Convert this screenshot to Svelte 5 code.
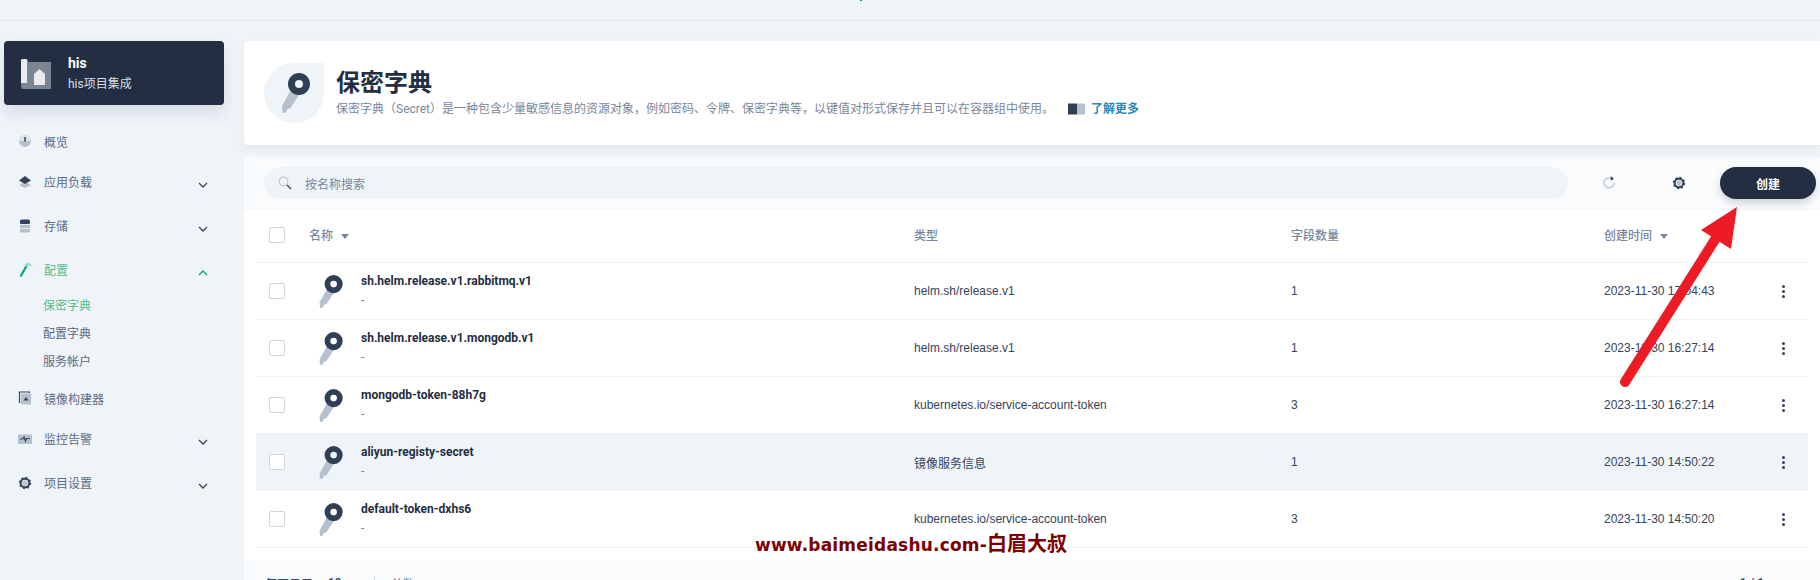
<script lang="ts">
	const menu = [
		{ name: '概览', icon: 'overview' },
		{ name: '应用负载', icon: 'layers', arrow: 'down' },
		{ name: '存储', icon: 'db', arrow: 'down' },
		{ name: '配置', icon: 'hammer', arrow: 'up', active: true, children: ['保密字典', '配置字典', '服务帐户'] },
		{ name: '镜像构建器', icon: 'image' },
		{ name: '监控告警', icon: 'monitor', arrow: 'down' },
		{ name: '项目设置', icon: 'gear', arrow: 'down' }
	];

	const rows = [
		{ name: 'sh.helm.release.v1.rabbitmq.v1', type: 'helm.sh/release.v1', count: 1, time: '2023-11-30 17:04:43' },
		{ name: 'sh.helm.release.v1.mongodb.v1', type: 'helm.sh/release.v1', count: 1, time: '2023-11-30 16:27:14' },
		{ name: 'mongodb-token-88h7g', type: 'kubernetes.io/service-account-token', count: 3, time: '2023-11-30 16:27:14' },
		{ name: 'aliyun-registy-secret', type: '镜像服务信息', count: 1, time: '2023-11-30 14:50:22', hover: true },
		{ name: 'default-token-dxhs6', type: 'kubernetes.io/service-account-token', count: 3, time: '2023-11-30 14:50:20' }
	];
</script>

{#snippet keyIcon(size)}
	<svg width={size} height={size} viewBox="0 -1 40 40">
		<path d="M17 16 L8 32 L8.500 39 L12 38.500 L13 35.500 L16.500 34 L25 21Z" fill="#b6c1cd" />
		<circle cx="25" cy="10" r="7.500" fill="none" stroke="#2f3f55" stroke-width="7" />
	</svg>
{/snippet}

{#snippet gear(size, hub)}
	<svg width={size} height={size} viewBox="0 0 16 16">
		<circle cx="8" cy="8" r="5" fill="none" stroke="#36435c" stroke-width="2.400" />
		<circle cx="8" cy="8" r="6.200" fill="none" stroke="#36435c" stroke-width="1.800" stroke-dasharray="2 2.870" />
		<circle cx="8" cy="8" r="3" fill={hub} />
	</svg>
{/snippet}

{#snippet navIcon(kind)}
	<svg width="16" height="16" viewBox="0 0 16 16">
		{#if kind === 'overview'}
			<circle cx="8" cy="8" r="6" fill="#b6c1cd" />
			<path d="M2 8a6 6 0 0 1 12 0Z" fill="#dfe5ec" />
			<rect x="7.200" y="4" width="1.600" height="4.500" fill="#36435c" />
		{:else if kind === 'layers'}
			<path d="M8 8 L14 11 L8 14 L2 11Z" fill="#b6c1cd" />
			<path d="M8 2 L14 6.500 L8 10 L2 6.500Z" fill="#36435c" />
		{:else if kind === 'db'}
			<rect x="3" y="1.500" width="10" height="4.500" rx="1.500" fill="#36435c" />
			<rect x="3" y="6.800" width="10" height="3.200" fill="#b6c1cd" />
			<rect x="3" y="10.800" width="10" height="3.700" rx="1.200" fill="#b6c1cd" />
		{:else if kind === 'hammer'}
			<path d="M9.500 4 L3.500 14.500" stroke="#00aa72" stroke-width="2.200" />
			<path d="M7.500 2.500 L12 0.500 L15.500 4 L11.500 3.500 L10 5.500Z" fill="#90e0c5" />
		{:else if kind === 'image'}
			<path d="M2.500 13 V2 H12.500 V3" fill="none" stroke="#36435c" stroke-width="1.200" />
			<rect x="4" y="3.500" width="10" height="11" rx="1" fill="#b6c1cd" />
			<path d="M9 7 L11.500 10.500 H6.500Z" fill="#36435c" />
		{:else if kind === 'monitor'}
			<rect x="1" y="3.500" width="14" height="9.500" rx="1" fill="#b6c1cd" />
			<path d="M3 8 H6 L7 6 L8.500 10 L9.500 7.500 H13" fill="none" stroke="#36435c" stroke-width="1.200" />
		{/if}
	</svg>
{/snippet}

<div class="page">
	<div class="topbar"></div>
	<div class="layout">
		<aside class="sidebar">
			<div class="project">
				<svg class="project-icon" width="30" height="30" viewBox="0 0 30 30">
					<path d="M0 24 V1 Q0 0 1.500 0 H5 Q6.500 0 6.500 1.500 V24Z" fill="#e9ebee" />
					<path d="M6.500 3 H30 V30 H2 Q0 30 0 27 V24 H6.500Z" fill="#7b8491" />
					<path d="M13 26 V15 L18.500 10 L24 15 V26Z" fill="#e9ebee" />
				</svg>
				<div>
					<div class="project-name">his</div>
					<div class="project-desc">his项目集成</div>
				</div>
			</div>
			<nav>
				{#each menu as item}
					<div class="nav-item" class:active={item.active} class:has-arrow={item.arrow}>
						<span class="nav-icon">
							{#if item.icon === 'gear'}
								{@render gear(14, '#b6c1cd')}
							{:else}
								{@render navIcon(item.icon)}
							{/if}
						</span>
						<span class="nav-text">{item.name}</span>
						{#if item.arrow}
							<svg class="chevron" width="10" height="6" viewBox="0 0 10 6">
								<path d={item.arrow === 'up' ? 'M1 5 L5 1 L9 5' : 'M1 1 L5 5 L9 1'} fill="none" stroke={item.active ? '#00aa72' : '#36435c'} stroke-width="1.300" />
							</svg>
						{/if}
					</div>
					{#if item.children}
						<div class="sub">
							{#each item.children as child, i}
								<div class="sub-item" class:current={i === 0}>{child}</div>
							{/each}
						</div>
					{/if}
				{/each}
			</nav>
		</aside>

		<main>
			<section class="banner">
				<div class="banner-icon">{@render keyIcon(40)}</div>
				<div>
					<h1>保密字典</h1>
					<p>
						保密字典（Secret）是一种包含少量敏感信息的资源对象，例如密码、令牌、保密字典等，以键值对形式保存并且可以在容器组中使用。
						<span class="learn">
							<svg width="18" height="12" viewBox="0 0 18 12">
								<rect x="0" y="0.500" width="9" height="11" fill="#2f3f55" />
								<rect x="9" y="0.500" width="8" height="11" fill="#b6c1cd" />
							</svg>
							<a href="#learn">了解更多</a>
						</span>
					</p>
				</div>
			</section>

			<section class="table-card">
				<div class="toolbar">
					<div class="search">
						<svg width="14" height="14" viewBox="0 0 14 14">
							<circle cx="5.500" cy="5.500" r="4.300" fill="none" stroke="#c1c9d1" stroke-width="1.200" />
							<path d="M9 9 L13 13" stroke="#36435c" stroke-width="1.300" />
						</svg>
						<span>按名称搜索</span>
					</div>
					<button class="tool refresh" aria-label="刷新">
						<svg width="14" height="14" viewBox="0 0 14 14">
							<path d="M9.500 2.600 A5 5 0 1 0 12 7" fill="none" stroke="#b6c1cd" stroke-width="1.300" />
							<path d="M9 0 L12 3 L8.500 4.500Z" fill="#36435c" />
						</svg>
					</button>
					<button class="tool" aria-label="设置">{@render gear(14, '#b6c1cd')}</button>
					<button class="create">创建</button>
				</div>

				<div class="table">
					<div class="row head">
						<span class="check"></span>
						<span class="col-name head-sort">名称 <i class="caret"></i></span>
						<span class="col-type">类型</span>
						<span class="col-count">字段数量</span>
						<span class="col-time head-sort">创建时间 <i class="caret"></i></span>
					</div>
					{#each rows as row}
						<div class="row" class:hover={row.hover}>
							<span class="check"></span>
							<span class="row-icon">{@render keyIcon(33)}</span>
							<div class="row-name">
								<strong>{row.name}</strong>
								<small>-</small>
							</div>
							<span class="col-type">{row.type}</span>
							<span class="col-count">{row.count}</span>
							<span class="col-time">{row.time}</span>
							<span class="more"><i></i><i></i><i></i></span>
						</div>
					{/each}
				</div>

				<div class="pager">
					<span class="pager-label">每页显示：</span>
					<span>10</span>
					<span class="sep"></span>
					<span class="pager-total">总数：5</span>
					<span class="pages">1 / 1</span>
				</div>
			</section>
		</main>
	</div>

	<!-- annotation laid over the screenshot -->
	<svg class="arrow" width="130" height="190" viewBox="0 0 130 190">
		<path d="M15 182 L106 38" stroke="#ed1c24" stroke-width="10" stroke-linecap="round" />
		<path d="M127 7 L91 30 L121 49Z" fill="#ed1c24" />
	</svg>
	<div class="watermark">www.baimeidashu.com-<span>白眉大叔</span></div>
	<span class="top-dot"></span>
</div>

<style>
	:global(body) {
		margin: 0;
		background: #eff4f9;
	}

	.page {
		position: relative;
		width: 1820px;
		height: 580px;
		overflow: hidden;
		font-family: Roboto, 'Noto Sans CJK SC', sans-serif;
		font-size: 12px;
		color: #242e42;
	}

	.topbar {
		height: 20px;
		border-bottom: 1px solid #e3e9ef;
		margin-bottom: 20px;
	}

	.top-dot {
		position: absolute;
		left: 860px;
		top: 0;
		width: 2px;
		height: 1px;
		background: #00aa72;
	}

	.layout {
		display: flex;
		align-items: flex-start;
	}

	.sidebar {
		flex: none;
		width: 220px;
		margin: 0 20px 0 4px;
	}

	.project {
		display: flex;
		align-items: center;
		gap: 17px;
		height: 64px;
		padding-left: 17px;
		box-sizing: border-box;
		background: #242e42;
		border-radius: 4px;
		box-shadow: 0 8px 16px rgba(36, 46, 66, 0.12);
		color: #fff;
	}

	.project-icon {
		flex: none;
		margin-top: 1px;
	}

	.project-name {
		font-weight: 700;
		font-size: 14px;
		line-height: 20px;
	}

	.project-desc {
		margin-top: 1px;
		line-height: 20px;
		color: #d8dee5;
	}

	nav {
		margin-top: 16px;
	}

	.nav-item {
		display: flex;
		align-items: center;
		height: 40px;
		padding-left: 13px;
		color: #5b6a85;
	}

	.nav-item.has-arrow {
		height: 44px;
	}

	.nav-icon {
		display: flex;
		width: 16px;
		justify-content: center;
		margin-right: 11px;
	}

	.nav-text {
		flex: 1;
	}

	.has-arrow .nav-icon {
		margin-top: -2px;
	}

	.has-arrow .nav-text {
		margin-top: -3px;
	}

	.nav-item.active {
		color: #55bc8a;
	}

	.chevron {
		margin-right: 16px;
		margin-top: 4px;
	}

	.sub {
		margin: -1px 0 2px;
	}

	.sub-item {
		height: 28px;
		line-height: 28px;
		padding-left: 39px;
		color: #5b6a85;
	}

	.sub-item.current {
		color: #55bc8a;
	}

	main {
		flex: 1;
		min-width: 0;
	}

	.banner {
		display: flex;
		align-items: center;
		height: 104px;
		padding-left: 20px;
		background: #fff;
		border-radius: 4px 0 0 4px;
		box-shadow: 0 4px 8px rgba(36, 46, 66, 0.06);
	}

	.banner-icon {
		flex: none;
		display: flex;
		align-items: center;
		justify-content: center;
		width: 60px;
		height: 60px;
		margin-right: 12px;
		background: #eff4f9;
		border-radius: 50% 0 50% 50%;
	}

	h1 {
		margin: 0;
		font-size: 24px;
		line-height: 32px;
		font-weight: 700;
	}

	.banner p {
		margin: 0;
		line-height: 20px;
		color: #79879c;
	}

	.learn {
		display: inline-flex;
		align-items: center;
		gap: 5px;
		margin-left: 11px;
		vertical-align: top;
	}

	.learn a {
		color: #2b87b5;
		font-weight: 700;
		text-decoration: none;
	}

	.table-card {
		margin-top: 12px;
		background: #fff;
		border-radius: 4px 0 0 4px;
	}

	.toolbar {
		display: flex;
		align-items: center;
		height: 52px;
		padding-left: 20px;
		background: #f9fbfd;
		border-bottom: 1px solid #eff4f9;
	}

	.search {
		display: flex;
		align-items: center;
		gap: 13px;
		flex: none;
		width: 1304px;
		height: 32px;
		box-sizing: border-box;
		padding-left: 14px;
		background: #eff4f9;
		border-radius: 16px;
		color: #79879c;
	}

	.tool {
		display: flex;
		align-items: center;
		justify-content: center;
		padding: 0;
		border: 0;
		background: none;
		width: 16px;
		height: 16px;
	}

	.refresh {
		margin-left: 33px;
		margin-right: 54px;
	}

	.create {
		width: 96px;
		height: 32px;
		margin-left: 33px;
		padding: 0;
		border: 0;
		border-radius: 16px;
		background: #242e42;
		color: #fff;
		font: 700 12px Roboto, 'Noto Sans CJK SC', sans-serif;
		box-shadow: 0 4px 8px rgba(36, 46, 66, 0.2);
	}

	.table {
		padding: 0 12px;
	}

	.row {
		display: flex;
		align-items: center;
		height: 57px;
		box-sizing: border-box;
		border-bottom: 1px solid #eff4f9;
	}

	.row.hover {
		background: #eff4f9;
	}

	.row.head {
		height: 53px;
		padding-bottom: 3px;
		color: #79879c;
		font-weight: 500;
	}

	.check {
		flex: none;
		width: 14px;
		height: 14px;
		margin-left: 13px;
		border: 1px solid #d1d7df;
		border-radius: 2px;
		background: #fff;
	}

	.col-name {
		flex: none;
		width: 605px;
		margin-left: 24px;
	}

	.caret {
		display: inline-block;
		margin-left: 5px;
		vertical-align: 1px;
		border-left: 4.500px solid transparent;
		border-right: 4.500px solid transparent;
		border-top: 5px solid #79879c;
	}

	.col-type {
		flex: none;
		width: 377px;
	}

	.col-count {
		flex: none;
		width: 313px;
	}

	.col-time {
		flex: none;
		width: 178px;
	}

	.row:not(.head) .col-type,
	.row:not(.head) .col-count,
	.row:not(.head) .col-time {
		font-family: 'Liberation Sans', 'Noto Sans CJK SC', sans-serif;
		color: #36435c;
	}

	.row-icon {
		display: flex;
		flex: none;
		margin-left: 28px;
	}

	.row-name {
		flex: none;
		width: 553px;
		margin: 1px 0 0 15px;
		display: flex;
		flex-direction: column;
		gap: 1px;
	}

	.row-name strong {
		font-weight: 700;
		line-height: 16px;
	}

	.row-name small {
		font-size: 12px;
		line-height: 20px;
		color: #79879c;
	}

	.more {
		display: flex;
		flex-direction: column;
		gap: 2px;
		width: 3px;
	}

	.more i {
		width: 3px;
		height: 3px;
		border-radius: 50%;
		background: #36435c;
	}

	.pager {
		display: flex;
		align-items: center;
		height: 46px;
		margin-top: 12px;
		padding: 0 56px 0 21px;
		background: #f9fbfd;
		color: #36435c;
		font-weight: 500;
	}

	.pager-label {
		margin-right: 3px;
	}

	.pager-total {
		color: #79879c;
	}

	.sep {
		width: 1px;
		height: 14px;
		margin: 0 16px 0 32px;
		background: #d1d7df;
	}

	.pages {
		margin-left: auto;
	}

	.arrow {
		position: absolute;
		left: 1610px;
		top: 200px;
	}

	.watermark {
		position: absolute;
		left: 755px;
		top: 532px;
		font: 700 17px/22px 'DejaVu Sans', sans-serif;
		letter-spacing: 0.2px;
		color: #7a0000;
		white-space: nowrap;
	}

	.watermark span {
		font: 700 20px/22px 'Noto Sans CJK SC', sans-serif;
		letter-spacing: 0;
	}
</style>
